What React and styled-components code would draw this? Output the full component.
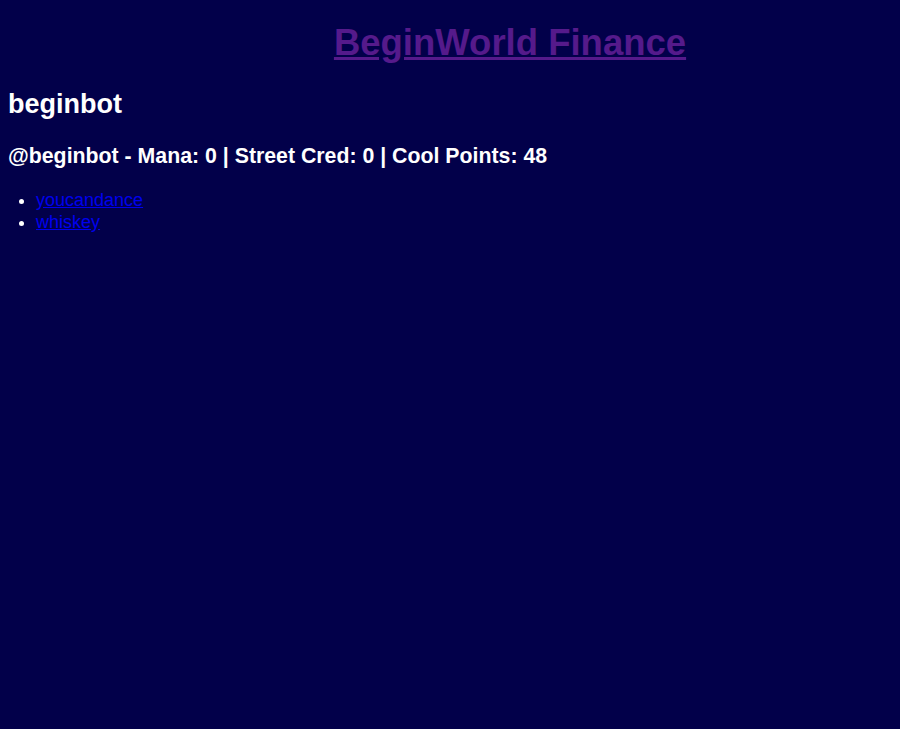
import React from 'react';
import styled, { createGlobalStyle } from 'styled-components';

const GlobalStyle = createGlobalStyle`
  html, body {
    background: #02004a;
  }
  body {
    margin: 8px;
    font-family: "Liberation Sans", Arial, sans-serif;
    font-size: 18px;
    color: #ffffff;
  }
`;

const Header = styled.header`
  text-align: center;
  padding-left: 120px;
`;

const Title = styled.h1`
  font-size: 36.5px;
  margin: 14px 0 25px;
`;

const TitleLink = styled.a`
  color: #551a8b;
  text-decoration: underline;
`;

const UserName = styled.h2`
  font-size: 27px;
  margin: 22px 0;
`;

const Stats = styled.h3`
  font-size: 21.3px;
  margin: 24px 0 20px;
`;

const List = styled.ul`
  margin: 18px 0;
  padding-left: 28px;
`;

const Item = styled.li`
  line-height: 22px;
`;

const ItemLink = styled.a`
  color: #0000ee;
`;

const commands = ['youcandance', 'whiskey'];

const App = () => {
  return (
    <>
      <GlobalStyle />
      <Header>
        <Title>
          <TitleLink href="#">BeginWorld Finance</TitleLink>
        </Title>
      </Header>
      <UserName>beginbot</UserName>
      <Stats>@beginbot - Mana: 0 | Street Cred: 0 | Cool Points: 48</Stats>
      <List>
        {commands.map((c) => (
          <Item key={c}>
            <ItemLink href="#">{c}</ItemLink>
          </Item>
        ))}
      </List>
    </>
  );
};

export default App;
